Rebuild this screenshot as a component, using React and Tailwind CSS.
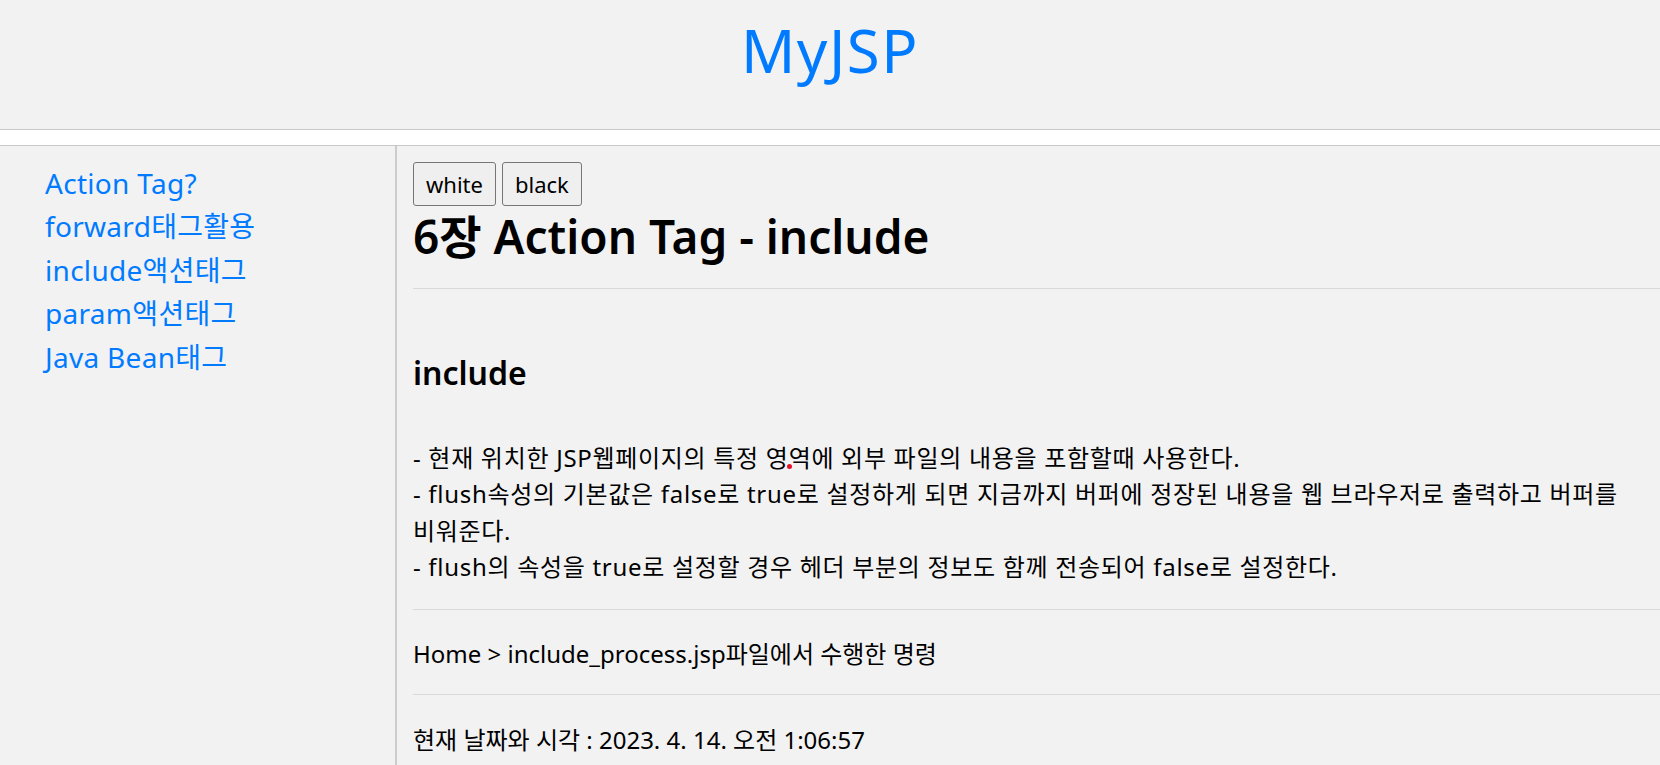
import React from 'react';

const links = ['Action Tag?', 'forward태그활용', 'include액션태그', 'param액션태그', 'Java Bean태그'];

const App = () => {
    return (
        <div className="min-h-[765px] bg-[#f2f2f2] text-black" style={{ fontFamily: '"Noto Sans", "Noto Sans CJK KR", sans-serif' }}>
            {/* header */}
            <header className="h-[130px] border-b border-[#c8c8c8] flex justify-center">
                <h1 className="mt-[20px] text-[60px] leading-[60px] tracking-[1.5px] text-[#007bff]">MyJSP</h1>
            </header>
            <div className="h-[16px] bg-white border-b border-[#c8c8c8]" />

            <div className="flex">
                {/* menu */}
                <nav className="w-[397px] shrink-0 border-r-2 border-[#cccccc] min-h-[620px] pl-[45px] pt-[16px]">
                    {links.map((l) => (
                        <a key={l} href="#" className="block text-[28px] leading-[43.4px] tracking-[0.3px] text-[#007bff]">{l}</a>
                    ))}
                </nav>

                {/* conteudo */}
                <main className="flex-1 pl-[16px] pt-[16px] break-keep">
                    <div className="flex gap-[6px]">
                        <button className="h-[44px] px-[12px] text-[22px] bg-[#efefef] border border-[#767676] rounded-[3px]">white</button>
                        <button className="h-[44px] px-[12px] text-[22px] bg-[#efefef] border border-[#767676] rounded-[3px]">black</button>
                    </div>
                    <h2 className="text-[46px] font-semibold leading-[60px]">6장 Action Tag - include</h2>
                    <hr className="mt-[22px] border-[#d9d9d9]" />
                    <h3 className="mt-[62px] text-[32px] font-semibold leading-[44px]">include</h3>
                    <p className="mt-[45px] text-[24px] leading-[36.4px] tracking-[0.7px]">
                        - 현재 위치한 JSP웹페이지의 특정 영<span className="relative inline-block w-0 h-0"><span className="absolute -left-[2px] -top-[3px] w-[5px] h-[5px] rounded-full bg-[#e81123]" /></span>역에 외부 파일의 내용을 포함할때 사용한다.<br />
                        - flush속성의 기본값은 false로 true로 설정하게 되면 지금까지 버퍼에 정장된 내용을 웹 브라우저로 출력하고 버퍼를 비워준다.<br />
                        - flush의 속성을 true로 설정할 경우 헤더 부분의 정보도 함께 전송되어 false로 설정한다.
                    </p>
                    <hr className="mt-[23px] border-[#d9d9d9]" />
                    <p className="pt-[26px] pb-[22px] text-[24px] leading-[36.4px]">Home &gt; include_process.jsp파일에서 수행한 명령</p>
                    <hr className="border-[#d9d9d9]" />
                    <p className="pt-[27px] pb-[20px] text-[24px] leading-[36.4px]">현재 날짜와 시각 : 2023. 4. 14. 오전 1:06:57</p>
                </main>
            </div>
        </div>
    );
};

export default App;
